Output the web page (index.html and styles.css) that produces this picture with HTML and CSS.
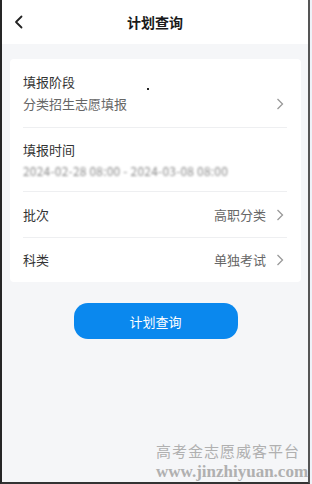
FILE: index.html
```html
<!DOCTYPE html>
<html lang="zh">
<head>
<meta charset="utf-8">
<title>计划查询</title>
<link rel="stylesheet" href="styles.css">
</head>
<body>
<div class="frame">
  <header class="nav">
    <svg class="back" width="10" height="14" viewBox="0 0 10 14"><polyline points="7.5,1.5 2,7 7.5,12.5" fill="none" stroke="#222" stroke-width="1.8" stroke-linecap="round" stroke-linejoin="round"/></svg>
    <h1 class="title">计划查询</h1>
  </header>
  <main class="content">
    <section class="card">
      <div class="row row-stack">
        <div class="label">填报阶段</div>
        <div class="line">
          <span class="value">分类招生志愿填报</span>
          <svg class="chev" width="8" height="12" viewBox="0 0 8 12"><polyline points="1.5,1 6.5,6 1.5,11" fill="none" stroke="#999" stroke-width="1.3"/></svg>
        </div>
      </div>
      <div class="row row-stack row-time">
        <div class="label">填报时间</div>
        <div class="date">2024-02-28 08:00 - 2024-03-08 08:00</div>
      </div>
      <div class="row row-inline row-a">
        <span class="label">批次</span>
        <span class="right"><span class="value">高职分类</span><svg class="chev" width="8" height="12" viewBox="0 0 8 12"><polyline points="1.5,1 6.5,6 1.5,11" fill="none" stroke="#999" stroke-width="1.3"/></svg></span>
      </div>
      <div class="row row-inline row-b">
        <span class="label">科类</span>
        <span class="right"><span class="value">单独考试</span><svg class="chev" width="8" height="12" viewBox="0 0 8 12"><polyline points="1.5,1 6.5,6 1.5,11" fill="none" stroke="#999" stroke-width="1.3"/></svg></span>
      </div>
    </section>
    <div class="actions">
      <button class="btn">计划查询</button>
    </div>
  </main>
  <span class="dot"></span>
  <div class="watermark">
    <div class="wm-cn">高考金志愿威客平台</div>
    <div class="wm-en">www.jinzhiyuan.com</div>
  </div>
</div>
</body>
</html>
```

FILE: styles.css
```css
html, body {
  margin: 0;
  padding: 0;
}
body {
  width: 312px;
  height: 484px;
  background: #eef2f8;
  font-family: "Noto Sans CJK SC", "Noto Sans", sans-serif;
  overflow: hidden;
}
.frame {
  position: relative;
  box-sizing: border-box;
  width: 310px;
  height: 484px;
  background: #f5f6f8;
  border-left: 2px solid #262626;
  border-right: 2px solid #555;
  border-bottom: 2px solid #333;
  display: flex;
  flex-direction: column;
}
.nav {
  position: relative;
  height: 44px;
  background: #fff;
  display: flex;
  align-items: center;
  justify-content: center;
  flex-shrink: 0;
}
.back {
  position: absolute;
  left: 12px;
  top: 15px;
}
.title {
  margin: 0;
  font-size: 14px;
  font-weight: 700;
  color: #1a1a1a;
  line-height: 20px;
}
.content {
  padding: 15px 7px 0 8px;
}
.card {
  background: #fff;
  border-radius: 4px;
  padding: 0 14px 0 13px;
}
.row {
  border-bottom: 1px solid #eeeff1;
  font-size: 13px;
  line-height: 20px;
}
.row:last-child {
  border-bottom: none;
}
.row-stack {
  padding: 13px 0 13px;
}
.row-time {
  padding: 12px 0 10px;
}
.label {
  color: #333;
}
.line {
  margin-top: 2px;
  display: flex;
  align-items: center;
  justify-content: space-between;
}
.value {
  color: #666;
}
.chev {
  display: block;
  margin-right: 3px;
}
.date {
  margin-top: 1px;
  font-size: 12px;
  color: #8a8a8a;
  filter: blur(1.2px);
  letter-spacing: 0.2px;
}
.row-inline {
  display: flex;
  align-items: center;
  justify-content: space-between;
}
.row-a {
  height: 45px;
}
.row-b {
  height: 44px;
}
.right {
  display: flex;
  align-items: center;
  gap: 10px;
}
.actions {
  display: flex;
  justify-content: center;
  padding-top: 21px;
}
.btn {
  width: 164px;
  height: 36px;
  border: none;
  border-radius: 14px;
  background: #0a88ee;
  color: #fff;
  font-family: "Noto Sans CJK SC", "Noto Sans", sans-serif;
  font-size: 13px;
  padding: 0;
}
.dot {
  position: absolute;
  left: 145px;
  top: 88px;
  width: 2px;
  height: 2px;
  background: #222;
}
.watermark {
  position: absolute;
  left: 154px;
  top: 442px;
  color: #b0b0b0;
  font-family: "Liberation Serif", "Noto Sans CJK SC", serif;
  line-height: 20px;
}
.wm-cn {
  font-size: 15px;
  letter-spacing: 1px;
}
.wm-en {
  font-size: 17px;
  font-weight: 700;
}
```
